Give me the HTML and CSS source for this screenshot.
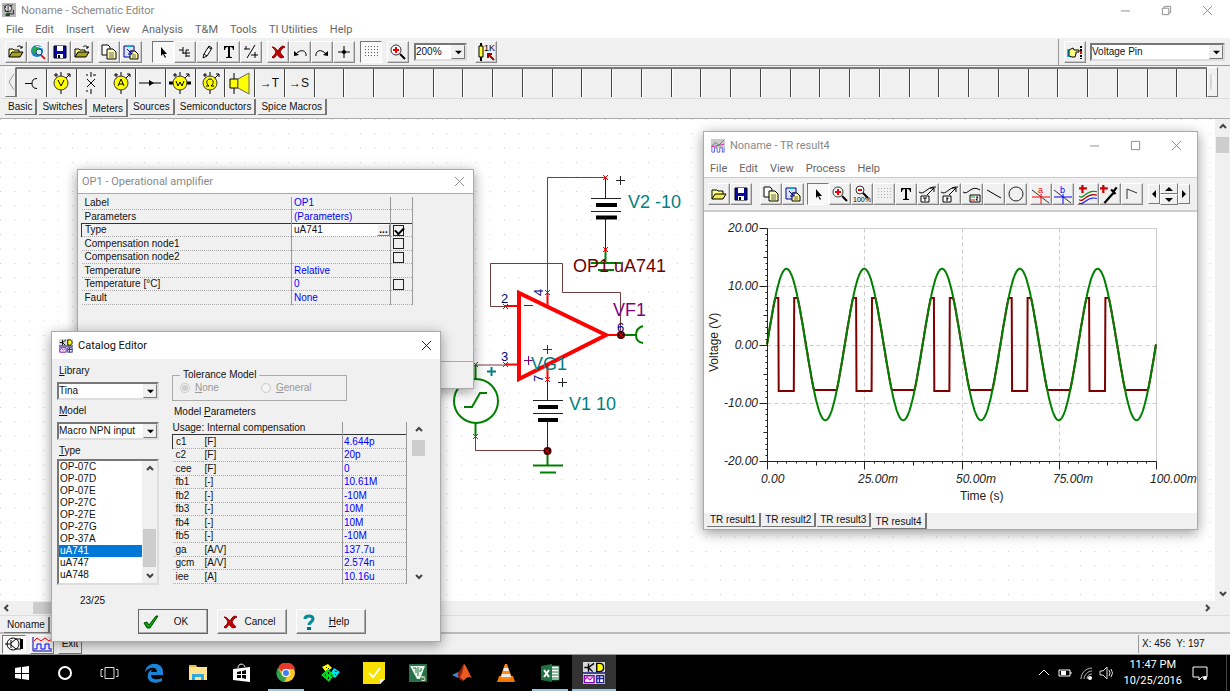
FILE: index.html
```html
<!DOCTYPE html>
<html lang="en">
<head>
    <meta charset="UTF-8">
    <meta name="viewport" content="width=device-width, initial-scale=1.0">
    <title>Noname - Schematic Editor</title>
    <link rel="stylesheet" href="styles.css">
</head>
<body>
    <!-- shared icons -->
    <svg class="sprite" aria-hidden="true">
        <symbol id="i-open" viewBox="0 0 16 16"><path d="M1 13V5h4l1 1h5v2" fill="#ffff8c" stroke="#000"/><path d="M1 13l3-5h11l-3 5z" fill="#a8a020" stroke="#000"/><path d="M9 3c2-2 4-1 5 1m0-2v2h-2" fill="none" stroke="#000"/></symbol>
        <symbol id="i-folder" viewBox="0 0 16 16"><path d="M1 13V4h5l1 1h5v3" fill="#ffff8c" stroke="#000"/><path d="M1 13l3-5h11l-3 5z" fill="#f0e850" stroke="#000"/></symbol>
        <symbol id="i-web" viewBox="0 0 16 16"><circle cx="7" cy="7" r="6" fill="#1c7fd0"/><path d="M3 3c2 0 3-1 5-1l1 3-3 2-1 3-3-2z" fill="#28b040"/><path d="M6 2c2 1 4 1 6 2" stroke="#fff" fill="none"/><circle cx="9" cy="8" r="3" fill="#d8f4ff" stroke="#147"/><path d="M11 11l4 4" stroke="#d22" stroke-width="2"/></symbol>
        <symbol id="i-save" viewBox="0 0 16 16"><path d="M2 2h12v12H2z" fill="#0808a0" stroke="#000"/><path d="M5 2h6v5H5zM5 10h6v4H5z" fill="#fff"/><path d="M6 11h2v3H6z" fill="#000"/></symbol>
        <symbol id="i-copy" viewBox="0 0 16 16"><path d="M1 1h6l2 2v8H1z" fill="#fff" stroke="#000"/><path d="M6 5h6l3 3v7H6z" fill="#ffffb0" stroke="#000"/><path d="M8 9h5M8 11h5M8 13h5" stroke="#666"/></symbol>
        <symbol id="i-paste" viewBox="0 0 16 16"><path d="M1 2h10v11H1z" fill="#d8e4f4" stroke="#0000a0"/><path d="M4 1h4v2H4z" fill="#00b0e0"/><path d="M7 7h5l3 3v5H7z" fill="#ffff90" stroke="#000"/><path d="M4 5l5 5M9 6v4H5" stroke="#0000a0" fill="none"/><path d="M9 11h4M9 13h4" stroke="#666"/></symbol>
        <symbol id="i-arrow" viewBox="0 0 16 16"><path d="M6 3v9l2-2 2 4 1-1-2-3h3z" fill="#000"/></symbol>
        <symbol id="i-wire" viewBox="0 0 16 16"><path d="M2 6h4M6 3v7M6 9h7M9 6v7M9 6h3M9 12h4" stroke="#000" fill="none"/></symbol>
        <symbol id="i-pen" viewBox="0 0 16 16"><path d="M5 10l5-8 3 2-5 8-4 2z" fill="#fff" stroke="#000"/><path d="M5 10l3 2M9 3l3 2" stroke="#000"/></symbol>
        <symbol id="i-text" viewBox="0 0 16 16"><path d="M3 2h10v4h-1c0-2-1-3-3-3v9c0 1 1 1 2 1v1H5v-1c1 0 2 0 2-1V3C5 3 4 4 4 6H3z" fill="#000"/></symbol>
        <symbol id="i-ratio" viewBox="0 0 16 16"><path d="M12 1L4 14M1 5h6M3 2v3M8 11h7M12 8v6" stroke="#000" fill="none"/></symbol>
        <symbol id="i-cross" viewBox="0 0 16 16"><path d="M2 3c3 0 4 2 6 4 1-2 3-5 5-5l2 1c-3 1-4 3-5 5 1 2 3 4 4 5l-3 1c-2-1-3-2-4-4-1 2-2 4-4 4l-1-1c2-1 3-3 4-5C5 6 4 4 2 3z" fill="#c00000" stroke="#900000"/></symbol>
        <symbol id="i-undo" viewBox="0 0 16 16"><path d="M14 12c1-5-5-8-10-2" fill="none" stroke="#000"/><path d="M2 12V7l5 4z" fill="#000"/></symbol>
        <symbol id="i-redo" viewBox="0 0 16 16"><path d="M2 12c-1-5 5-8 10-2" fill="none" stroke="#000"/><path d="M14 12V7l-5 4z" fill="#000"/></symbol>
        <symbol id="i-node" viewBox="0 0 16 16"><path d="M2 8h12M8 2v12" stroke="#000" stroke-width="1"/><circle cx="8" cy="8" r="2" fill="#000"/></symbol>
        <symbol id="i-grid" viewBox="0 0 16 16"><path d="M2 2.500h13M2 5.500h13M2 8.500h13M2 11.500h13" stroke="#555" stroke-dasharray="1 2" fill="none"/></symbol>
        <symbol id="i-zoom" viewBox="0 0 16 16"><circle cx="6" cy="6" r="5" fill="#fff" stroke="#333"/><path d="M3 6h6M6 3v6" stroke="#e00" stroke-width="2"/><path d="M10 10l5 5" stroke="#000" stroke-width="2"/></symbol>
        <symbol id="i-zoomout" viewBox="0 0 18 18"><circle cx="7" cy="5" r="4" fill="#fff" stroke="#333"/><path d="M5 5h4" stroke="#e00" stroke-width="2"/><path d="M10 8l5 5" stroke="#000" stroke-width="2"/><text x="0" y="17" font-size="7">100%</text></symbol>
        <symbol id="i-value" viewBox="0 0 20 20"><path d="M5 1v18" stroke="#000" stroke-width="2"/><path d="M3 4h4v11H3z" fill="#ffff30" stroke="#000"/><text x="8" y="9" font-size="9">1K</text><path d="M18 18l-6-6m0 4v-4h4" stroke="#a00000" stroke-width="2" fill="none"/></symbol>
        <symbol id="i-hand" viewBox="0 0 16 16"><path d="M0 5h2v8H0z" fill="#00c8d8"/><path d="M2 6l4-2 1 2h5v2H9v2l-1 3H5l-3-1z" fill="#ffff80" stroke="#000"/><path d="M14 2v13" stroke="#000" stroke-width="2" stroke-dasharray="2 1"/><path d="M13 7h2v3h-2z" fill="#f00"/></symbol>
        <symbol id="i-close" viewBox="0 0 12 12"><path d="M1 1l10 10M11 1L1 11" stroke="currentColor" fill="none"/></symbol>
        <symbol id="i-min" viewBox="0 0 12 12"><path d="M1 6.500h10" stroke="currentColor"/></symbol>
        <symbol id="i-max" viewBox="0 0 12 12"><path d="M1.500 1.500h9v9h-9z" stroke="currentColor" fill="none"/></symbol>
        <symbol id="i-restore" viewBox="0 0 12 12"><path d="M1.500 3.500h7v7h-7zM3.500 3.500v-2h7v7h-2" stroke="currentColor" fill="none"/></symbol>
        <symbol id="i-down" viewBox="0 0 8 8"><path d="M0 2h8L4 6z" fill="#000"/></symbol>
        <symbol id="i-up" viewBox="0 0 8 8"><path d="M0 6h8L4 2z" fill="#000"/></symbol>
        <symbol id="i-left" viewBox="0 0 8 8"><path d="M6 0v8L2 4z" fill="#000"/></symbol>
        <symbol id="i-right" viewBox="0 0 8 8"><path d="M2 0v8l4-4z" fill="#000"/></symbol>
        <symbol id="i-chev" viewBox="0 0 8 8"><path d="M1 5l3-3 3 3" stroke="#444" stroke-width="2" fill="none"/></symbol>
        <symbol id="i-app" viewBox="0 0 16 16"><path d="M0 0h16v16H0z" fill="#d8d8d8"/><path d="M1 4h3M4 1v6M4 4l4-3M4 4l3 3" stroke="#000" fill="none"/><path d="M10 1h2c4 0 4 6 0 6h-2z" fill="#ffff00" stroke="#000"/><path d="M0 8h16" stroke="#000080"/><path d="M1 10h7v5H1z" fill="#fff" stroke="#8000c0"/><path d="M1 13l2-2 2 2 2-2" stroke="#e000e0" fill="none"/><path d="M10 10h5v5h-5zM12 10v5M10 12h5" fill="#fff" stroke="#2020a0"/></symbol>
        <symbol id="m-body" viewBox="0 0 24 24"><path d="M12 1v22M17 7l4-4m-3 0h3v3M7 2v4M5 4h4" stroke="#000" fill="none"/><circle cx="12" cy="12" r="7" fill="#ffff00" stroke="#333"/></symbol>
    </svg>

    <header class="titlebar">
        <svg class="appicon" viewBox="0 0 16 16"><path d="M0 0h16v16H0z" fill="#b8b8b8"/><circle cx="7" cy="6" r="4" fill="#eee" stroke="#111"/><path d="M2 3l3 3M3 9l4 1M7 3v6M9 4l3-2M5 13c3-3 6 1 9-1M13 8v4" stroke="#111" fill="none"/><path d="M4 12h5v3H4z" fill="#1a4a1a"/></svg>
        <h1 class="caption">Noname - Schematic Editor</h1>
        <div class="sysbuttons">
            <button aria-label="Minimize"><svg><use href="#i-min"/></svg></button>
            <button aria-label="Restore"><svg><use href="#i-restore"/></svg></button>
            <button aria-label="Close"><svg><use href="#i-close"/></svg></button>
        </div>
    </header>
    <nav class="menubar">
        <a href="#">File</a><a href="#">Edit</a><a href="#">Insert</a><a href="#">View</a><a href="#">Analysis</a><a href="#">T&amp;M</a><a href="#">Tools</a><a href="#">TI Utilities</a><a href="#">Help</a>
    </nav>

    <div class="toolbar">
        <div class="group">
            <button class="tool" aria-label="Open"><svg><use href="#i-open"/></svg></button>
            <button class="tool" aria-label="Open from web"><svg><use href="#i-web"/></svg></button>
            <button class="tool" aria-label="Save"><svg><use href="#i-save"/></svg></button>
            <button class="tool" aria-label="Close file"><svg><use href="#i-open"/></svg></button>
        </div>
        <div class="group">
            <button class="tool" aria-label="Copy"><svg><use href="#i-copy"/></svg></button>
            <button class="tool" aria-label="Paste"><svg><use href="#i-paste"/></svg></button>
        </div>
        <div class="group spaced">
            <button class="tool pressed" aria-label="Select"><svg><use href="#i-arrow"/></svg></button>
            <button class="tool" aria-label="Wire"><svg><use href="#i-wire"/></svg></button>
            <button class="tool" aria-label="Draw"><svg><use href="#i-pen"/></svg></button>
            <button class="tool" aria-label="Text"><svg><use href="#i-text"/></svg></button>
            <button class="tool" aria-label="Input output"><svg><use href="#i-ratio"/></svg></button>
        </div>
        <div class="group">
            <button class="tool" aria-label="Delete"><svg><use href="#i-cross"/></svg></button>
            <button class="tool" aria-label="Rotate left"><svg><use href="#i-undo"/></svg></button>
            <button class="tool" aria-label="Rotate right"><svg><use href="#i-redo"/></svg></button>
            <button class="tool" aria-label="Node"><svg><use href="#i-node"/></svg></button>
        </div>
        <button class="tool pressed" aria-label="Grid"><svg><use href="#i-grid"/></svg></button>
        <button class="tool" aria-label="Zoom"><svg><use href="#i-zoom"/></svg></button>
        <div class="combo zoom"><select aria-label="Zoom level"><option>200%</option></select><span class="drop"><svg><use href="#i-down"/></svg></span></div>
        <button class="tool wide" aria-label="Values"><svg><use href="#i-value"/></svg></button>
        <div class="finder">
            <button class="tool" aria-label="Find component"><svg><use href="#i-hand"/></svg></button>
            <div class="combo pin"><select aria-label="Component"><option>Voltage Pin</option></select><span class="drop"><svg><use href="#i-down"/></svg></span></div>
        </div>
    </div>

    <div class="parts">
        <button class="scroller" aria-label="Scroll left"><svg viewBox="0 0 8 24"><path d="M7 4L2 12l5 8" stroke="#999" fill="none"/></svg></button>
        <div class="cells" id="cells">
            <button class="cell" aria-label="Voltage pin"><svg viewBox="0 0 24 24"><path d="M6 12.500h7M18 7.500q-5 0-5 5t5 5" stroke="#000" fill="none"/></svg></button>
            <button class="cell" aria-label="Voltmeter"><svg viewBox="0 0 24 24"><use href="#m-body"/><path d="M9 9l3 6 3-6" stroke="#000" fill="none"/></svg></button>
            <button class="cell" aria-label="Open circuit"><svg viewBox="0 0 24 24"><path d="M12 1v5M9 4h-2M12 18v5M8 8l8 8M16 8l-8 8M14 4h3M9 20h-2" stroke="#000" fill="none"/></svg></button>
            <button class="cell" aria-label="Ammeter"><svg viewBox="0 0 24 24"><use href="#m-body"/><path d="M9 15l3-7 3 7M10 13h4" stroke="#000" fill="none"/></svg></button>
            <button class="cell" aria-label="Current arrow"><svg viewBox="0 0 24 24"><path d="M1 12h22" stroke="#000"/><path d="M11 9l5 3-5 3z" fill="#000"/></svg></button>
            <button class="cell" aria-label="Wattmeter"><svg viewBox="0 0 24 24"><path d="M1 12h22" stroke="#000" stroke-width="3"/><use href="#m-body"/><path d="M8 10l2 5 2-4 2 4 2-5" stroke="#000" fill="none"/></svg></button>
            <button class="cell" aria-label="Ohmmeter"><svg viewBox="0 0 24 24"><use href="#m-body"/><path d="M8 15h3c-4-3-2-7 1-7s5 4 1 7h3" stroke="#000" fill="none"/></svg></button>
            <button class="cell" aria-label="Loudspeaker"><svg viewBox="0 0 24 24"><path d="M2 8h8v9H2z" fill="#ffff00" stroke="#000"/><path d="M10 8l11-6v21l-11-6z" fill="#ffff00" stroke="#666"/><path d="M6 2v6M6 17v6" stroke="#000"/></svg></button>
            <button class="cell">→T</button>
            <button class="cell">→S</button>
        </div>
        <button class="scroller" aria-label="Scroll right"><svg viewBox="0 0 8 24"><path d="M2 4v16" stroke="#bbb"/><path d="M3 5l3 7-3 7" stroke="#fff" fill="none"/></svg></button>
    </div>
    <div class="tabs">
        <button class="tab">Basic</button><button class="tab">Switches</button><button class="tab active">Meters</button><button class="tab">Sources</button><button class="tab">Semiconductors</button><button class="tab">Spice Macros</button>
    </div>

    <main class="workspace">
        <svg class="schematic">
            <defs><pattern id="dots" width="14.400" height="14.400" patternUnits="userSpaceOnUse"><path d="M0 0h1v1H0z" fill="#ccc"/></pattern></defs>
            <rect width="100%" height="100%" fill="url(#dots)"/>
            <g transform="translate(0 -119)">
                <g class="wire">
                    <path d="M547.500 293V177.500H605.500M505 306.500H490.500V263.500H562.500V292.500H620.500V335M475.500 365H505M475.500 436V450.500H547.500"/>
                </g>
                <g class="lead">
                    <path d="M605.500 177V198M591 198.500h30M591 211.500h30M605.500 219v30M547.500 379v21M533 400.500h30M533 413.500h30M547.500 422v29"/>
                    <path d="M616 180.500h9M620.500 176v9M558 382.500h9M562.500 378v9"/>
                    <path class="plate" d="M596 205h21M596 217.500h21M538 407h20M538 420h20"/>
                </g>
                <g class="green">
                    <path d="M605.500 249v14M591 263h30M598 270h16M547.500 451v14M533 465.500h30M540 472.500h16M475.500 365v15M475.500 423v13M621 335h15M643 326q-7 2-7 9t7 8M464 407h8l8-14h7"/>
                    <circle cx="476" cy="401" r="22"/>
                </g>
                <path class="amp" d="M519 293v86l87-44z"/>
                <path class="amppin" d="M505 306h13M505 364.500h13M547.500 293v13M547.500 364v15M606 335h12"/>
                <circle cx="621" cy="335" r="4" fill="#400"/><circle cx="547.500" cy="451" r="4" fill="#400"/>
                <path class="mark" d="M603 175l5 5m0-5l-5 5M603 247l5 5m0-5l-5 5M503 304l5 5m0-5l-5 5M503 362l5 5m0-5l-5 5M545 290l5 5m0-5l-5 5M545 377l5 5m0-5l-5 5M473 362l5 5m0-5l-5 5M473 434l5 5m0-5l-5 5M619 333l4 4m0-4l-4 4M545 449l4 4m0-4l-4 4"/>
                <path class="sign" d="M524 305.500h9M543 349.500h9M547.500 345v9M524 360.500h9M528.500 356v9"/>
                <path stroke="#008080" stroke-width="2" d="M487 371.500h9M491.500 367v9"/>
                <g class="names">
                    <text class="teal" x="628" y="208">V2 -10</text>
                    <text class="teal" x="569" y="410">V1 10</text>
                    <text class="teal" x="531" y="370">VG1</text>
                    <text class="maroon" x="573" y="272">OP1 uA741</text>
                    <text class="purple" x="613" y="316">VF1</text>
                </g>
                <g class="pins">
                    <text x="501" y="303">2</text><text x="501" y="361">3</text><text x="617" y="332">6</text>
                    <text transform="translate(543 296) rotate(-90)">4</text><text transform="translate(543 382) rotate(-90)">7</text>
                </g>
            </g>
        </svg>
        <div class="vbar"><svg><use href="#i-chev"/></svg><span class="thumb"></span><svg class="flip"><use href="#i-chev"/></svg></div>
    </main>
    <div class="hbar"><svg class="turnleft"><use href="#i-chev"/></svg><span class="thumb"></span><svg class="turnright"><use href="#i-chev"/></svg></div>
    <div class="doctabs"><button class="tab">Noname</button></div>
    <footer class="status">
        <button class="mini pressed" aria-label="Schematic"><svg viewBox="0 0 20 16"><circle cx="9" cy="8" r="6" fill="none" stroke="#000"/><path d="M1 8h6M7 4v8M7 7l5-4M7 9l5 4M12 3h5M12 13h5" stroke="#000" fill="none"/><path d="M16 3h3v10h-3z"/></svg></button>
        <button class="mini" aria-label="Results"><svg viewBox="0 0 20 16"><path d="M1 1v14h19" stroke="#0000a0" fill="none"/><path d="M2 5l3-3 4 3 4-3 4 3 3-2" stroke="#f00" fill="none"/><path d="M2 13h3V8h4v5h4V8h4v5h3" stroke="#0000f0" fill="none"/></svg></button>
        <button class="mini">Exit</button>
        <output class="coords">X: 456&nbsp; Y: 197</output>
    </footer>

    <nav class="taskbar">
        <button class="task" aria-label="Start"><svg viewBox="0 0 20 20"><path d="M3 5l6-1v6H3zM10 4l7-1v7h-7zM3 11h6v5l-6-1zM10 11h7v6l-7-1z" fill="#fff"/></svg></button>
        <button class="task" aria-label="Search"><svg viewBox="0 0 20 20"><circle cx="9" cy="10" r="6" fill="none" stroke="#fff" stroke-width="2"/></svg></button>
        <button class="task" aria-label="Task view"><svg viewBox="0 0 20 20"><path d="M5 4.500h9v11H5zM3 6.500H1v7h2M16 6.500h2v7h-2" fill="none" stroke="#ddd"/></svg></button>
        <button class="task" aria-label="Edge"><svg viewBox="0 0 20 20"><path d="M1 9C2-2 19-2 19 9v3H7c0 5 7 5 11 3v3C10 22 2 19 4 11c1-3 3-4 5-5-1 1-2 2-2 3h6c0-5-7-6-12 0z" fill="#1b84d8"/></svg></button>
        <button class="task" aria-label="File Explorer"><svg viewBox="0 0 20 20"><path d="M1 2h7l1 2h10v13H1z" fill="#ffe38e"/><path d="M1 2h7v2H1z" fill="#e8b840"/><path d="M4 17v-6h12v6h-3v-3H7v3z" fill="#2fa8e0"/></svg></button>
        <button class="task" aria-label="Store"><svg viewBox="0 0 20 20"><path d="M1 6l17-2v15L1 17z" fill="#fff"/><path d="M6 5c0-5 6-5 7-1" fill="none" stroke="#fff" stroke-width="1"/><path d="M5 9l4-1v3H5zM10 8l4-1v4h-4zM5 12h4v3H5zM10 12h4v4l-4-1z" fill="#000"/></svg></button>
        <button class="task running" aria-label="Chrome"><svg viewBox="0 0 20 20"><circle cx="10" cy="10" r="9" fill="#f8c926"/><path d="M2 5a9 9 0 0 1 17 1h-9a4 4 0 0 0-4 3z" fill="#e33b2e"/><path d="M2 5l4 7a4 4 0 0 0 5 2l-3 5A9 9 0 0 1 2 5z" fill="#31a350"/><circle cx="10" cy="10" r="4" fill="#fff"/><circle cx="10" cy="10" r="3" fill="#3f7ff0"/></svg></button>
        <button class="task" aria-label="Dice"><svg viewBox="0 0 20 20"><path d="M2 4l6-3 4 4-6 4z" fill="#ff0"/><path d="M14 5l6 4-5 6-5-4z" fill="#00e0f0"/><path d="M8 6l6 6-5 7-8-7z" fill="#00d820"/><path d="M5 11h1v2H5zM8 9h1v2H8zM8 14h1v2H8zM11 12h1v1h-1zM15 8h2v1h-2zM15 11h1v1h-1zM6 4h1v1H6zM8 5h1v1H8z"/></svg></button>
        <button class="task" aria-label="Notes"><svg class="full" viewBox="0 0 22 22"><path d="M0 0h22v17l-5 5H0z" fill="#f8e000"/><path d="M17 22v-5h5z" fill="#fff"/><path d="M6 11l4 4 7-9" stroke="#fff" stroke-width="2" fill="none"/></svg></button>
        <button class="task" aria-label="Verilog"><svg viewBox="0 0 20 20"><path d="M1 1h18v18H1z" fill="#287048"/><path d="M2 3h15l-5 13H9z" fill="#e8f4ec"/><path d="M5 5h3v5M10 4v9M13 5v3h-2" stroke="#287048" fill="none"/><text x="13" y="18" font-size="8" fill="#fff">5</text></svg></button>
        <button class="task" aria-label="Matlab"><svg viewBox="0 0 20 20"><path d="M0 12l6-3 3 4-3 2z" fill="#3a86d0"/><path d="M6 9c3-1 4-7 6-8l2 8-5 9-3-4z" fill="#8c2010"/><path d="M12 1c3 2 5 10 8 14-5-3-6 1-9 3-1-3-2-3-3-4 2-3 3-7 4-13z" fill="#e85a20"/></svg></button>
        <button class="task" aria-label="VLC"><svg viewBox="0 0 20 20"><path d="M3 13h14l2 6H1z" fill="#f07800"/><path d="M9 1h2l5 14q-6 3-12 0z" fill="#ff8c10"/><path d="M8 5h4l1 3H7zM6 11h8l1 3H5z" fill="#eee"/></svg></button>
        <button class="task running" aria-label="Excel"><svg viewBox="0 0 20 20"><path d="M10 3h9v14h-9z" fill="#fff" stroke="#207245"/><path d="M12 6h6M12 9h6M12 12h6M12 15h6" stroke="#207245"/><path d="M1 3l11-2v18L1 17z" fill="#207245"/><path d="M4 7l5 7M9 7l-5 7" stroke="#fff" stroke-width="2"/></svg></button>
        <button class="task running current" aria-label="Schematic Editor"><svg class="full"><use href="#i-app"/></svg></button>
        <div class="tray">
            <svg viewBox="0 0 16 16"><path d="M3 10l5-5 5 5" stroke="#fff" fill="none"/></svg>
            <svg viewBox="0 0 16 16"><path d="M2 5h11v6H2zM14 7v2" stroke="#fff" fill="none"/><path d="M4 6h5v4H4z" fill="#fff"/></svg>
            <svg viewBox="0 0 16 16"><path d="M3 14C3 8 8 3 14 3M6 14c0-4 4-8 8-8M9 14c0-3 2-5 5-5" stroke="#bbb" fill="none"/><circle cx="12" cy="13" r="2" fill="#fff"/></svg>
            <svg viewBox="0 0 16 16"><path d="M1 6h3l4-4v12l-4-4H1zM10 5q2 3 0 6M12 4q3 4 0 8" stroke="#ddd" fill="none"/></svg>
            <time class="clock">11:47 PM<br>10/25/2016</time>
            <svg class="notice" viewBox="0 0 16 16"><path d="M1 2h14v10H10l-3 3v-3H1z" stroke="#fff" fill="none"/><circle cx="13" cy="13" r="2" fill="#fff"/></svg>
        </div>
    </nav>

    <!-- component properties -->
    <section class="window props">
        <div class="wintitle"><h2 class="caption">OP1 - Operational amplifier</h2><button class="winclose" aria-label="Close"><svg><use href="#i-close"/></svg></button></div>
        <div class="propbody">
            <table class="grid proptable">
                <tr><td>Label</td><td>OP1</td><td></td></tr>
                <tr><td>Parameters</td><td>(Parameters)</td><td></td></tr>
                <tr class="focus"><td>Type</td><td class="edit"><div class="field"><input aria-label="Type" value="uA741"><button aria-label="Browse">...</button></div></td><td><input type="checkbox" aria-label="Show type" checked></td></tr>
                <tr><td>Compensation node1</td><td></td><td><input type="checkbox" aria-label="Show node1"></td></tr>
                <tr><td>Compensation node2</td><td></td><td><input type="checkbox" aria-label="Show node2"></td></tr>
                <tr><td>Temperature</td><td>Relative</td><td></td></tr>
                <tr><td>Temperature [°C]</td><td>0</td><td><input type="checkbox" aria-label="Show temperature"></td></tr>
                <tr><td>Fault</td><td>None</td><td></td></tr>
            </table>
        </div>
        <div class="propfoot"></div>
    </section>

    <!-- transient result -->
    <section class="window result">
        <div class="wintitle tall">
            <svg class="appicon" viewBox="0 0 16 16"><path d="M0 0h16v10H0z" fill="#ccc"/><path d="M1 8l4-4 4 3 6-6" stroke="#20a030" fill="none"/><path d="M0 9l15-3" stroke="#d020c0"/><path d="M1 10v5h3v-5h3v5h3v-5h3v5h2v-5" stroke="#5050e0" stroke-width="1" fill="none"/></svg>
            <h2 class="caption">Noname - TR result4</h2>
            <div class="sysbuttons">
                <button aria-label="Minimize"><svg><use href="#i-min"/></svg></button>
                <button aria-label="Maximize"><svg><use href="#i-max"/></svg></button>
                <button aria-label="Close"><svg><use href="#i-close"/></svg></button>
            </div>
        </div>
        <nav class="menubar"><a href="#">File</a><a href="#">Edit</a><a href="#">View</a><a href="#">Process</a><a href="#">Help</a></nav>
        <div class="toolbar">
            <div class="group">
                <button class="tool" aria-label="Open"><svg><use href="#i-folder"/></svg></button>
                <button class="tool" aria-label="Save"><svg><use href="#i-save"/></svg></button>
            </div>
            <div class="group spaced">
                <button class="tool" aria-label="Copy"><svg><use href="#i-copy"/></svg></button>
                <button class="tool" aria-label="Paste"><svg><use href="#i-paste"/></svg></button>
            </div>
            <div class="group">
                <button class="tool pressed" aria-label="Select"><svg><use href="#i-arrow"/></svg></button>
                <button class="tool" aria-label="Zoom in"><svg><use href="#i-zoom"/></svg></button>
                <button class="tool" aria-label="Zoom 100%"><svg class="big"><use href="#i-zoomout"/></svg></button>
                <button class="tool faded" aria-label="Grid"><svg><use href="#i-grid"/></svg></button>
                <button class="tool" aria-label="Text"><svg><use href="#i-text"/></svg></button>
                <button class="tool" aria-label="Label curve"><svg class="big" viewBox="0 0 18 18"><path d="M0 7c5 4 8-6 17-5M8 10l7-7m-4 0h4v4" stroke="#000" fill="none"/><path d="M2 11h8v6H2zM4 13h4M6 13v3" stroke="#000" fill="#fff"/></svg></button>
                <button class="tool" aria-label="Query curve"><svg class="big" viewBox="0 0 18 18"><path d="M0 7c5 4 8-6 17-5M8 10l7-7m-4 0h4v4" stroke="#000" fill="none"/><path d="M2 11h8v6H2z" stroke="#000" fill="#fff"/><path d="M5 13h2v1H6v2" stroke="#000" fill="none"/></svg></button>
                <button class="tool" aria-label="Legend"><svg class="big" viewBox="0 0 18 18"><path d="M0 7c5 4 8-8 17-2" stroke="#000" fill="none"/><path d="M7 10h10v7H7z" stroke="#000" fill="#fff"/><path d="M8 12h4" stroke="#0a0"/><path d="M8 15h4" stroke="#e00"/><path d="M13 12h2l-2 3h2" stroke="#000" fill="none"/></svg></button>
                <button class="tool" aria-label="Line"><svg viewBox="0 0 16 16"><path d="M1 4l14 8" stroke="#000"/></svg></button>
                <button class="tool" aria-label="Circle"><svg viewBox="0 0 16 16"><circle cx="8" cy="8" r="7" stroke="#222" fill="none"/></svg></button>
            </div>
            <div class="group">
                <button class="tool" aria-label="Cursor a"><svg class="huge" viewBox="0 0 20 20"><path d="M1 6l17 13" stroke="#333"/><path d="M1 13h18M10 10v10" stroke="#f00"/><text x="7" y="9" font-size="9" fill="#f00">a</text></svg></button>
                <button class="tool" aria-label="Cursor b"><svg class="huge" viewBox="0 0 20 20"><path d="M1 6l17 13" stroke="#333"/><path d="M1 13h18M10 10v10" stroke="#00f"/><text x="7" y="9" font-size="9" fill="#00f">b</text></svg></button>
            </div>
            <div class="group">
                <button class="tool" aria-label="Add curves"><svg class="huge" viewBox="0 0 18 18"><path d="M1 4h7M4 1v7" stroke="#c00" stroke-width="2"/><path d="M1 11c4 4 6-7 16-4" stroke="#080" fill="none"/><path d="M1 14c4 4 6-7 16-4" stroke="#a00" fill="none"/><path d="M1 17c4 4 6-7 16-4" stroke="#22f" fill="none"/></svg></button>
                <button class="tool" aria-label="Pick"><svg class="huge" viewBox="0 0 18 18"><path d="M0 4h7M3 1v7" stroke="#c00" stroke-width="2"/><path d="M4 17l8-9" stroke="#000" stroke-width="2"/><path d="M10 5l4 4M12 7l3-4" stroke="#000" stroke-width="2"/></svg></button>
                <button class="tool" aria-label="Play"><svg viewBox="0 0 16 16"><path d="M3 13V3l10 4" stroke="#333" fill="none"/></svg></button>
            </div>
            <div class="spinner">
                <button class="arrow" aria-label="Left"><svg><use href="#i-left"/></svg></button>
                <div class="updown"><button class="arrow" aria-label="Up"><svg><use href="#i-up"/></svg></button><button class="arrow" aria-label="Down"><svg><use href="#i-down"/></svg></button></div>
                <button class="arrow" aria-label="Right"><svg><use href="#i-right"/></svg></button>
            </div>
        </div>
        <svg class="plot" id="plot" viewBox="0 0 493 301"></svg>
        <div class="tabs">
            <button class="tab">TR result1</button><button class="tab">TR result2</button><button class="tab">TR result3</button><button class="tab active">TR result4</button>
        </div>
    </section>

    <!-- catalog dialog -->
    <section class="window catalog">
        <div class="wintitle tall">
            <svg class="appicon"><use href="#i-app"/></svg>
            <h2 class="caption">Catalog Editor</h2>
            <button class="winclose" aria-label="Close"><svg><use href="#i-close"/></svg></button>
        </div>
        <div class="catbody">
            <div class="side">
                <label for="library"><u>L</u>ibrary</label>
                <div class="combo"><select id="library"><option>Tina</option></select><span class="drop"><svg><use href="#i-down"/></svg></span></div>
                <label for="model"><u>M</u>odel</label>
                <div class="combo"><select id="model"><option>Macro NPN input</option></select><span class="drop"><svg><use href="#i-down"/></svg></span></div>
                <label for="type"><u>T</u>ype</label>
                <div class="listbox">
                    <select id="type" size="10">
                        <option>OP-07C</option><option>OP-07D</option><option>OP-07E</option><option>OP-27C</option><option>OP-27E</option><option>OP-27G</option><option>OP-37A</option><option selected>uA741</option><option>uA747</option><option>uA748</option>
                    </select>
                    <div class="vbar low"><svg><use href="#i-chev"/></svg><span class="thumb"></span><svg class="flip"><use href="#i-chev"/></svg></div>
                </div>
                <p class="count">23/25</p>
            </div>
            <div class="detail">
                <fieldset class="tolerance" disabled>
                    <legend>Tolerance Model</legend>
                    <label><input type="radio" name="tol" checked><span><u>N</u>one</span></label>
                    <label><input type="radio" name="tol"><span><u>G</u>eneral</span></label>
                </fieldset>
                <p class="heading">Model <u>P</u>arameters</p>
                <div class="params">
                    <table class="grid paramtable">
                        <colgroup><col class="name"><col><col class="value"></colgroup>
                        <tr><td colspan="2">Usage: Internal compensation</td><td></td></tr>
                        <tr class="focus"><td>c1</td><td>[F]</td><td>4.644p</td></tr>
                        <tr><td>c2</td><td>[F]</td><td>20p</td></tr>
                        <tr><td>cee</td><td>[F]</td><td>0</td></tr>
                        <tr><td>fb1</td><td>[-]</td><td>10.61M</td></tr>
                        <tr><td>fb2</td><td>[-]</td><td>-10M</td></tr>
                        <tr><td>fb3</td><td>[-]</td><td>10M</td></tr>
                        <tr><td>fb4</td><td>[-]</td><td>10M</td></tr>
                        <tr><td>fb5</td><td>[-]</td><td>-10M</td></tr>
                        <tr><td>ga</td><td>[A/V]</td><td>137.7u</td></tr>
                        <tr><td>gcm</td><td>[A/V]</td><td>2.574n</td></tr>
                        <tr><td>iee</td><td>[A]</td><td>10.16u</td></tr>
                    </table>
                    <div class="vbar"><svg><use href="#i-chev"/></svg><span class="thumb"></span><svg class="flip"><use href="#i-chev"/></svg></div>
                </div>
            </div>
        </div>
        <div class="actions">
            <button class="action default"><svg viewBox="0 0 16 16"><path d="M1 9l3-1 2 3 7-9h2L7 14H4z" fill="#00a800" stroke="#005000"/></svg><span>OK</span></button>
            <button class="action"><svg viewBox="0 0 16 16"><use href="#i-cross"/></svg><span>Cancel</span></button>
            <button class="action"><svg viewBox="0 0 16 16"><path d="M4 5c0-4 8-4 8 0 0 3-4 3-4 6" stroke="#008c98" stroke-width="3" fill="none"/><path d="M6 13h4v3H6z" fill="#006c80"/></svg><span><u>H</u>elp</span></button>
        </div>
    </section>

    <script src="script.js"></script>
</body>
</html>
```
FILE: styles.css
```css
* {
    box-sizing: border-box;
}

body {
    margin: 0;
    height: 100vh;
    overflow: hidden;
    display: flex;
    flex-direction: column;
    position: relative;
    background: #f0f0f0;
    color: #111;
    font-family: "Liberation Sans", Arial, sans-serif;
    font-size: 10px;
    line-height: 12px;
}

button, select, input {
    font: inherit;
    color: inherit;
    margin: 0;
    padding: 0;
}

button {
    background: #f0f0f0;
    border: 1px solid;
    border-color: #fff #777 #777 #fff;
    display: flex;
    align-items: center;
    justify-content: center;
}

.sprite {
    display: none;
}

svg {
    display: block;
    flex: none;
    width: 16px;
    height: 16px;
}

/* title and menu */
.titlebar, .wintitle {
    display: flex;
    align-items: center;
    height: 20px;
    flex: none;
    background: #fff;
    color: #888;
}

.titlebar {
    padding: 0 2px;
}

.appicon {
    width: 14px;
    height: 14px;
}

.caption {
    flex: 1;
    margin: 0 0 0 5px;
    font: 11px Roboto, sans-serif;
}

.sysbuttons {
    display: flex;
}

.sysbuttons button, .winclose {
    width: 41px;
    border: 0;
    background: none;
}

.sysbuttons svg, .winclose svg {
    width: 11px;
    height: 11px;
}

.winclose {
    width: 28px;
}

.menubar {
    display: flex;
    gap: 12px;
    flex: none;
    height: 18px;
    padding-left: 6px;
    align-items: center;
    background: #fff;
    font: 11px Roboto, sans-serif;
}

.menubar a {
    color: #666;
    text-decoration: none;
}

/* toolbars */
.toolbar {
    display: flex;
    align-items: center;
    gap: 5px;
    flex: none;
    height: 28px;
    padding: 1px 5px 0;
    border-bottom: 1px solid #999;
}

.group {
    display: flex;
}

.spaced {
    margin-left: 5px;
}

.tool {
    width: 22px;
    height: 22px;
    border-color: #fff #888 #888 #fff;
    box-shadow: inset -1px -1px #c8c8c8;
}

.pressed {
    background: #f8f8f8;
    border-color: #777 #fff #fff #777;
    box-shadow: none;
}

.big {
    width: 18px;
    height: 18px;
}

.wide svg, .huge {
    width: 20px;
    height: 20px;
}

.wide {
    margin-left: 3px;
}

.faded svg {
    opacity: 0.4;
}

.combo {
    display: flex;
    height: 18px;
    border: 2px solid;
    border-color: #777 #ddd #ddd #777;
    background: #fff;
}

.combo select {
    flex: 1;
    min-width: 0;
    appearance: none;
    border: 0;
    background: #fff;
}

.drop {
    display: flex;
    align-items: center;
    justify-content: center;
    width: 14px;
    background: #f0f0f0;
    border: 1px solid;
    border-color: #eee #777 #777 #eee;
}

.drop svg {
    width: 7px;
    height: 7px;
}

.zoom {
    width: 53px;
}

.finder {
    display: flex;
    align-items: center;
    gap: 4px;
    align-self: stretch;
    margin-left: auto;
    padding-left: 5px;
    border-left: 1px solid #999;
}

.pin {
    width: 135px;
}

/* component strip */
.parts {
    display: flex;
    flex: none;
    height: 33px;
    padding: 1px 12px 1px 5px;
    border-bottom: 1px solid #ddd;
}

.scroller {
    width: 11px;
}

.scroller svg {
    width: 8px;
    height: 24px;
}

.cells {
    display: flex;
    flex: 1;
    border-top: 2px solid #777;
    border-left: 1px solid #777;
}

.cell {
    flex: 1;
    min-width: 0;
    border: 0;
    border-right: 1px solid #444;
    box-shadow: inset 1px 0 #fff;
    font-size: 12px;
}

.cell svg {
    width: 24px;
    height: 24px;
}

/* tabs */
.tabs {
    display: flex;
    align-items: flex-start;
    flex: none;
    height: 20px;
    padding-left: 5px;
    gap: 2px;
    border-bottom: 1px solid #aaa;
}

.tab {
    height: 16px;
    padding: 0 3px;
    border: 0;
    border-right: 2px solid #777;
    border-bottom: 1px solid #777;
}

.active {
    height: 18px;
    padding-top: 3px;
}

/* drawing area */
.workspace {
    display: flex;
    flex: 1;
    min-height: 0;
    background: #fff;
}

.schematic {
    flex: 1;
    min-width: 0;
    height: 100%;
}

.schematic path, .schematic circle {
    fill: none;
}

.schematic pattern path {
    fill: #ccc;
}

.schematic circle[fill] {
    fill: #400;
}

.wire {
    stroke: #703c3c;
}

.lead {
    stroke: #222;
}

.plate {
    stroke: #000;
    stroke-width: 4;
}

.green {
    stroke: #008000;
    stroke-width: 2;
}

.amp {
    stroke: #f00;
    stroke-width: 4;
}

.amppin {
    stroke: #f00;
    stroke-width: 2;
}

.mark {
    stroke: #e00000;
}

.sign {
    stroke: #800080;
}

.names {
    font-size: 18px;
}

.teal {
    fill: #008080;
}

.maroon {
    fill: #700000;
}

.purple {
    fill: #800080;
}

.pins {
    font-size: 13px;
    fill: #000080;
}

.vbar {
    display: flex;
    flex-direction: column;
    align-items: center;
    width: 15px;
    padding: 4px 0;
    background: #f0f0f0;
}

.vbar svg, .hbar svg {
    width: 8px;
    height: 8px;
}

.vbar .thumb {
    width: 13px;
    height: 16px;
    margin: 6px 0 auto;
    background: #cdcdcd;
}

.vbar.low .thumb {
    height: 38px;
    margin: auto 0 4px;
}

.flip {
    transform: rotate(180deg);
}

.turnleft {
    transform: rotate(-90deg);
}

.turnright {
    transform: rotate(90deg);
}

.hbar {
    display: flex;
    align-items: center;
    flex: none;
    height: 14px;
    padding: 0 19px 0 3px;
}

.hbar .thumb {
    width: 40px;
    height: 12px;
    margin: 0 auto 0 22px;
    background: #cdcdcd;
}

.doctabs {
    flex: none;
    height: 19px;
    padding: 1px 4px;
    border-top: 1px solid #ddd;
    border-bottom: 2px solid #bbb;
}

.status {
    display: flex;
    align-items: center;
    gap: 4px;
    flex: none;
    height: 21px;
    padding: 0 2px;
    border-bottom: 1px solid #999;
}

.mini {
    width: 24px;
    height: 19px;
}

.mini svg {
    width: 20px;
    height: 16px;
}

.coords {
    width: 90px;
    margin-left: auto;
    padding: 3px;
    border-left: 1px solid #999;
    white-space: nowrap;
}

/* taskbar */
.taskbar {
    display: flex;
    flex: none;
    height: 36px;
    background: #000;
    color: #fff;
}

.task {
    width: 44px;
    border: 0;
    background: #000;
}

.task svg {
    width: 20px;
    height: 20px;
}

.task .full {
    width: 22px;
    height: 22px;
}

.running {
    background: linear-gradient(#8cc8e8, #8cc8e8) bottom / 36px 2px no-repeat #000;
}

.current {
    background-color: #333;
    background-size: 44px 2px;
}

.tray {
    display: flex;
    align-items: center;
    gap: 5px;
    margin-left: auto;
    margin-right: 3px;
    padding-right: 18px;
    border-right: 1px solid #444;
}

.clock {
    margin-left: 3px;
    font: 11px/16px Roboto, sans-serif;
    text-align: center;
}

.notice {
    margin-left: 5px;
}

/* windows */
.window {
    position: absolute;
    display: flex;
    flex-direction: column;
    background: #f0f0f0;
    border: 1px solid #aaa;
    box-shadow: 0 3px 12px rgba(0, 0, 0, 0.4);
}

.wintitle {
    height: 23px;
}

.tall {
    height: 27px;
    padding-left: 7px;
}

.props {
    left: 77px;
    top: 169px;
    width: 397px;
    height: 220px;
}

.props .caption {
    margin-left: 4px;
}

.propbody {
    flex: 1;
    padding: 3px 3px 0;
    border-top: 1px solid #aaa;
}

.propfoot {
    height: 27px;
    border-top: 1px solid #aaa;
}

.grid {
    border-collapse: collapse;
    table-layout: fixed;
}

.grid td {
    padding: 0 0 0 3px;
    line-height: 12px;
    border-bottom: 1px dotted #aaa;
    white-space: nowrap;
}

.grid td:nth-last-child(1), .proptable td:nth-child(2) {
    border-left: 1px solid #999;
}

.grid td:last-child {
    border-right: 1px solid #999;
}

.grid .focus td {
    border-top: 1px solid #333;
}

.grid .focus td:first-child {
    border-left: 1px solid #333;
}

.proptable {
    width: 332px;
    height: 108px;
}

.proptable td:nth-child(2) {
    width: 99px;
    padding-left: 2px;
    color: #00f;
}

.proptable td:last-child {
    width: 22px;
    padding-left: 2px;
}

.proptable .edit {
    background: #fff;
}

.field {
    display: flex;
    height: 12px;
    color: #111;
}

.field input {
    flex: 1;
    min-width: 0;
    border: 0;
    background: #fff;
}

.field button {
    width: 13px;
    font-weight: bold;
}

.proptable [type="checkbox"] {
    display: block;
    appearance: none;
    width: 11px;
    height: 11px;
    border: 1px solid #222;
}

.proptable [type="checkbox"]:checked::before {
    content: "";
    display: block;
    width: 7px;
    height: 4px;
    margin: 1px;
    border-left: 2px solid #000;
    border-bottom: 2px solid #000;
    transform: rotate(-45deg);
}

/* transient result window */
.result {
    left: 703px;
    top: 131px;
    width: 495px;
    height: 399px;
}

.result .toolbar {
    height: 35px;
    gap: 3px;
    padding: 0 4px;
    border-top: 1px solid #ccc;
    border-bottom: 2px solid #ccc;
}

.spinner {
    display: flex;
    align-items: center;
    margin-left: 2px;
}

.arrow {
    width: 12px;
    height: 20px;
}

.updown .arrow {
    width: 18px;
    height: 11px;
}

.arrow svg {
    width: 8px;
    height: 8px;
}

.plot {
    width: 100%;
    height: 301px;
    background: #fff;
    font-size: 12px;
    fill: #222;
}

.ticklabel {
    font-style: italic;
}

.axis {
    stroke: #222;
}

.frame {
    stroke: #ccc;
    fill: none;
}

.gridline {
    stroke: #ccc;
    stroke-dasharray: 4 3;
}

.input-curve {
    stroke: #008000;
    stroke-width: 2;
    fill: none;
}

.output-curve {
    stroke: #800000;
    stroke-width: 2;
    fill: none;
}

.result .tabs {
    height: 16px;
    padding-left: 3px;
    gap: 1px;
    border: 0;
}

.result .tab {
    height: 14px;
}

.result .active {
    height: 16px;
}

/* catalog window */
.catalog {
    left: 51px;
    top: 331px;
    width: 390px;
    height: 311px;
}

.catalog .wintitle {
    color: #111;
}

.catbody {
    display: flex;
    gap: 13px;
    padding: 6px 14px 0 5px;
}

.side {
    display: flex;
    flex-direction: column;
    width: 103px;
}

.side label {
    margin: 0 2px 5px;
}

.side .combo {
    margin-bottom: 5px;
}

.listbox {
    display: flex;
    height: 126px;
    margin-top: -3px;
    border: 2px solid;
    border-color: #777 #ddd #ddd #777;
    background: #fff;
}

.listbox select {
    flex: 1;
    min-width: 0;
    border: 0;
    outline: 0;
    overflow: hidden;
    background: #fff;
}

.listbox option {
    height: 12px;
    min-height: 12px;
    padding: 0 1px;
    line-height: 12px;
}

.listbox option:checked {
    background: linear-gradient(#0078d7, #0078d7);
    -webkit-text-fill-color: #fff;
}

.count {
    margin: 10px 0 0 23px;
}

.detail {
    flex: 1;
}

.tolerance {
    display: flex;
    gap: 42px;
    width: 175px;
    height: 32px;
    margin: 4px 0 5px;
    padding: 0 7px;
    border: 1px solid #aaa;
    color: #999;
}

.tolerance legend {
    padding: 0 3px;
    color: #111;
}

.tolerance label {
    display: flex;
    height: 14px;
    align-items: center;
    gap: 5px;
}

.tolerance input {
    width: 10px;
    height: 10px;
}

.heading {
    margin: 0 0 4px 2px;
}

.params {
    display: flex;
    gap: 4px;
}

.paramtable {
    width: 235px;
    height: 162px;
}

.name {
    width: 29px;
}

.value {
    width: 64px;
}

.paramtable td:last-child {
    padding-left: 1px;
    color: #00f;
}

.paramtable td[colspan] {
    padding-left: 0;
}

.actions {
    display: flex;
    gap: 9px;
    margin: auto 0 7px 86px;
}

.action {
    width: 70px;
    height: 25px;
    padding: 0 4px;
    justify-content: flex-start;
    box-shadow: inset -1px -1px #aaa;
}

.action span {
    flex: 1;
}

.default {
    border-color: #666;
}
```
FILE: script.js
```js
const plot = document.getElementById('plot');
const cells = document.getElementById('cells');

// Plot area: 100 ms wide, +-20 V high
const left = 63, top0 = 16, width = 389, height = 233;
const x = t => left + t / 100 * width;
const y = v => top0 + (20 - v) / 40 * height;

function line(x1, y1, x2, y2, cls) {
    return `<path class="${cls}" d="M${Math.round(x1) + 0.5} ${Math.round(y1) + 0.5}L${Math.round(x2) + 0.5} ${Math.round(y2) + 0.5}"/>`;
}

let out = `<rect class="frame" x="${left + 0.5}" y="${top0 + 0.5}" width="${width}" height="${height}"/>`;

for (const v of [10, 0, -10]) out += line(left, y(v), left + width, y(v), 'gridline');
for (const t of [25, 50, 75]) out += line(x(t), top0, x(t), top0 + height, 'gridline');

// Output follows the input up to 8 V and inverts when overdriven
let sine = '';
let clipped = '';
for (let i = 0; i <= 1000; i++) {
    const t = i / 10;
    const v = 13 * Math.sin(t * Math.PI / 10);
    const phase = t % 20;
    let o = Math.max(-7.8, Math.min(8, v));
    if (phase > 2.9 && phase < 7) o = -8;
    sine += `${i ? 'L' : 'M'}${x(t).toFixed(1)} ${y(v).toFixed(1)}`;
    clipped += `${i ? 'L' : 'M'}${x(t).toFixed(1)} ${y(o).toFixed(1)}`;
}
out += `<path class="output-curve" d="${clipped}"/><path class="input-curve" d="${sine}"/>`;

// Axes
out += line(left, top0, left, top0 + height, 'axis') + line(left, top0 + height, left + width, top0 + height, 'axis');
for (let v = -20; v <= 20; v++) {
    const len = v % 10 === 0 ? 8 : v % 5 === 0 ? 4 : 2;
    out += line(left - len, y(v), left, y(v), 'axis');
}
for (let i = 0; i <= 40; i++) {
    const len = i % 10 === 0 ? 8 : i % 5 === 0 ? 4 : 2;
    out += line(x(i * 2.5), top0 + height, x(i * 2.5), top0 + height + len, 'axis');
}
for (const v of [20, 10, 0, -10, -20]) {
    out += `<text class="ticklabel" x="54" y="${Math.round(y(v)) + 4}" text-anchor="end">${v.toFixed(2)}</text>`;
}
['0.00', '25.00m', '50.00m', '75.00m', '100.00m'].forEach((s, i) => {
    out += `<text class="ticklabel" x="${Math.round(x(i * 25)) - 6}" y="271">${s}</text>`;
});
out += '<text x="256" y="288">Time (s)</text>';
out += '<text transform="translate(14 160) rotate(-90)">Voltage (V)</text>';
plot.innerHTML = out;

// Empty slots of the component strip
for (let i = cells.children.length; i < 40; i++) {
    const slot = document.createElement('span');
    slot.className = 'cell';
    cells.appendChild(slot);
}
```
